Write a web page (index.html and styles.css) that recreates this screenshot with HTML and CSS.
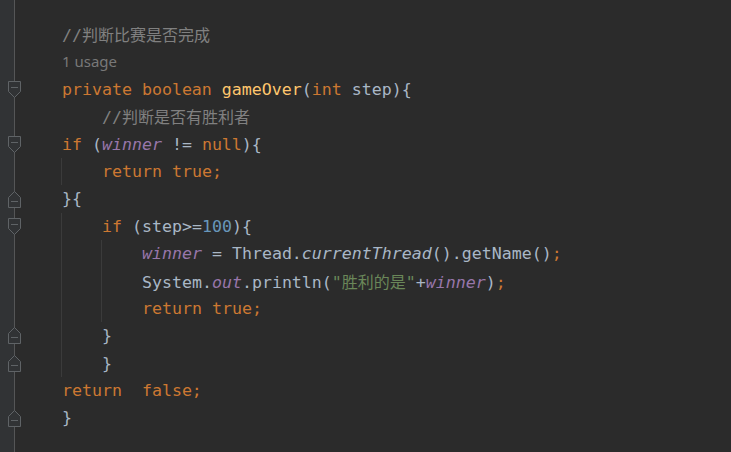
FILE: index.html
```html
<!DOCTYPE html>
<html lang="zh">
<head>
<meta charset="utf-8">
<title>Editor</title>
<link rel="stylesheet" href="styles.css">
</head>
<body>
<div class="editor">
  <div class="gutter">
    <div class="row"></div>
    <div class="row"></div>
    <div class="row"><svg class="fold" viewBox="0 0 13 17" width="13" height="17"><path class="shape" d="M0.5 0.5H12.5V10.5L6.5 16.5L0.5 10.5Z"/><path class="minus" d="M3 6.5H10"/></svg></div>
    <div class="row"></div>
    <div class="row"><svg class="fold" viewBox="0 0 13 17" width="13" height="17"><path class="shape" d="M0.5 0.5H12.5V10.5L6.5 16.5L0.5 10.5Z"/><path class="minus" d="M3 6.5H10"/></svg></div>
    <div class="row"></div>
    <div class="row"><svg class="fold" viewBox="0 0 13 17" width="13" height="17"><path class="shape" d="M6.5 0.5L12.5 6.5V16.5H0.5V6.5Z"/><path class="minus" d="M3 10.5H10"/></svg></div>
    <div class="row"><svg class="fold" viewBox="0 0 13 17" width="13" height="17"><path class="shape" d="M0.5 0.5H12.5V10.5L6.5 16.5L0.5 10.5Z"/><path class="minus" d="M3 6.5H10"/></svg></div>
    <div class="row"></div>
    <div class="row"></div>
    <div class="row"></div>
    <div class="row"><svg class="fold" viewBox="0 0 13 17" width="13" height="17"><path class="shape" d="M6.5 0.5L12.5 6.5V16.5H0.5V6.5Z"/><path class="minus" d="M3 10.5H10"/></svg></div>
    <div class="row"><svg class="fold" viewBox="0 0 13 17" width="13" height="17"><path class="shape" d="M6.5 0.5L12.5 6.5V16.5H0.5V6.5Z"/><path class="minus" d="M3 10.5H10"/></svg></div>
    <div class="row"></div>
    <div class="row"><svg class="fold" viewBox="0 0 13 17" width="13" height="17"><path class="shape" d="M6.5 0.5L12.5 6.5V16.5H0.5V6.5Z"/><path class="minus" d="M3 10.5H10"/></svg></div>
  </div>
  <div class="code">
    <div class="line c">//<span class="cjk">判断比赛是否完成</span></div>
    <div class="line hint">1 usage</div>
    <div class="line"><span class="k">private boolean</span> <span class="f">gameOver</span>(<span class="k">int</span> step){</div>
    <div class="line c">    //<span class="cjk">判断是否有胜利者</span></div>
    <div class="line"><span class="k">if</span> (<span class="v">winner</span> != <span class="k">null</span>){</div>
    <div class="guide">
      <div class="line"><span class="k">return true;</span></div>
    </div>
    <div class="line">}{</div>
    <div class="guide">
      <div class="line"><span class="k">if</span> (step&gt;=<span class="n">100</span>){</div>
      <div class="guide">
        <div class="line"><span class="v">winner</span> = Thread.<span class="i">currentThread</span>().getName()<span class="k">;</span></div>
        <div class="line">System.<span class="v">out</span>.println(<span class="s">"<span class="cjk">胜利的是</span>"</span>+<span class="v">winner</span>)<span class="k">;</span></div>
        <div class="line"><span class="k">return true;</span></div>
      </div>
      <div class="line">}</div>
      <div class="line">}</div>
    </div>
    <div class="line"><span class="k">return  false;</span></div>
    <div class="line">}</div>
  </div>
</div>
</body>
</html>
```

FILE: styles.css
```css
html, body {
  margin: 0;
  padding: 0;
  background: #2b2b2b;
}

.editor {
  display: flex;
  height: 452px;
  overflow: hidden;
}

.gutter {
  width: 14px;
  flex: none;
  background: #313335;
  border-right: 1px solid #555657;
  padding-top: 21px;
  box-sizing: content-box;
}

.row {
  height: 27.4px;
  display: flex;
  align-items: center;
}

.fold {
  flex: none;
  margin-left: 8px;
  display: block;
}

.fold .shape {
  fill: #313335;
  stroke: #5f6366;
  stroke-width: 1;
}

.fold .minus {
  stroke: #5f6366;
  stroke-width: 1;
}

.code {
  flex: 1;
  padding-top: 21px;
  padding-left: 47px;
  font-family: "DejaVu Sans Mono", "Liberation Mono", monospace;
  font-size: 16.6px;
  color: #a9b7c6;
}

.line {
  height: 27.4px;
  line-height: 27.4px;
  white-space: pre;
  overflow: visible;
}

.guide {
  margin-left: -1px;
  border-left: 1px solid #3b3b3b;
  padding-left: 40px;
}

.cjk {
  font-family: "Noto Sans CJK SC", sans-serif;
  font-size: 16px;
}

.hint {
  font-family: "Noto Sans", "Open Sans", sans-serif;
  font-size: 15px;
  color: #787878;
}

.c { color: #808080; }
.k { color: #cc7832; }
.f { color: #ffc66d; }
.n { color: #6897bb; }
.s { color: #6a8759; }
.v { color: #9876aa; font-style: italic; }
.i { font-style: italic; }
```
